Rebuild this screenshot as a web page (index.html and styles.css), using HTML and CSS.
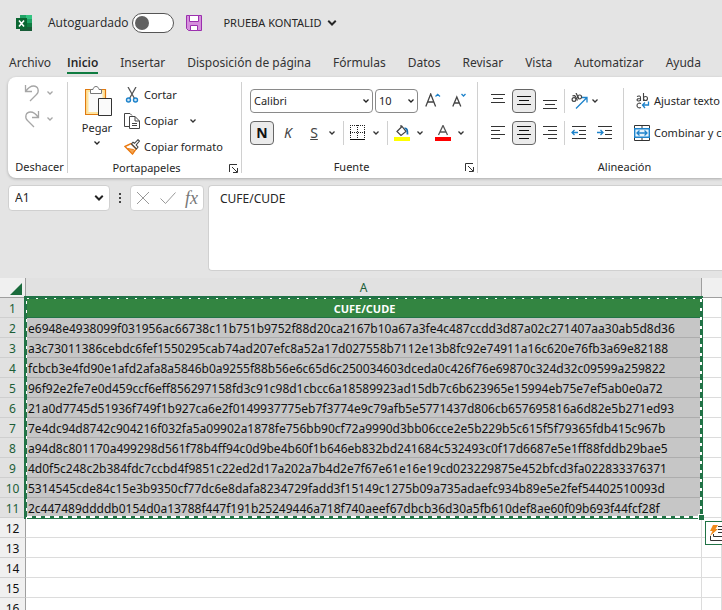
FILE: index.html
```html
<!DOCTYPE html>
<html lang="es">
<head>
    <meta charset="UTF-8">
    <meta name="viewport" content="width=device-width, initial-scale=1.0">
    <title>PRUEBA KONTALID - Excel</title>
    <link rel="stylesheet" href="styles.css">
</head>
<body>

    <svg class="sprite" aria-hidden="true">
        <symbol id="chevron" viewBox="0 0 8 8"><path d="M1.5 2.5 4 5 6.500 2.500" fill="none" stroke="currentColor" stroke-width="1.3"/></symbol>
        <symbol id="launcher" viewBox="0 0 9 9"><path d="M.5 8V.5H8M3 3l5 5M8.500 4v4.500H4" fill="none" stroke="#333"/></symbol>
    </svg>

    <!-- Barra de título -->
    <header class="titlebar">
        <svg class="logo" width="16" height="16" viewBox="0 0 16 16">
            <path d="M4 0h6v4H4z" fill="#21a366"/><path d="M10 0h6v4h-6z" fill="#33c481"/>
            <path d="M4 4h6v4H4z" fill="#107c41"/><path d="M10 4h6v4h-6z" fill="#21a366"/>
            <path d="M4 8h12v8H4z" fill="#185c37"/><path d="M10 8h6v4h-6z" fill="#107c41"/>
            <path d="M0 3h11v11H0z" fill="#0b6632"/>
            <path d="M3 5.500l5 6M8 5.500l-5 6" stroke="#fff" stroke-width="1.600"/>
        </svg>
        <label class="autosave">Autoguardado <input type="checkbox" class="switch"></label>
        <button class="icon-btn save" aria-label="Guardar">
            <svg width="16" height="16" viewBox="0 0 16 16">
                <path d="M.5.5h15v15h-13l-2-2z" fill="#d58fdc" stroke="#9b2fae"/>
                <path d="M3.500.5h9v6h-9zM4.500 10.500h7v5h-7z" fill="#fff" stroke="#9b2fae"/>
            </svg>
        </button>
        <button class="doc-name">PRUEBA KONTALID
            <svg width="12" height="12"><use href="#chevron"/></svg>
        </button>
    </header>

    <nav class="tabs">
        <a href="#" class="file">Archivo</a>
        <a href="#" class="active">Inicio</a>
        <a href="#">Insertar</a>
        <a href="#">Disposición de página</a>
        <a href="#">Fórmulas</a>
        <a href="#">Datos</a>
        <a href="#">Revisar</a>
        <a href="#">Vista</a>
        <a href="#">Automatizar</a>
        <a href="#">Ayuda</a>
    </nav>

    <!-- Cinta de opciones -->
    <section class="ribbon">
        <div class="group undo-group">
            <div class="group-body">
                <button class="icon-btn" aria-label="Deshacer">
                    <svg width="16" height="18" viewBox="0 0 16 18"><path d="M1.500 1v6.500H8M1.500 7.500C4 4 6.500 2 9.500 2c5 0 6 5.500 3 8.500L6 17" fill="none" stroke="#a6a6a6" stroke-width="1.300"/></svg>
                    <svg class="chev" width="8" height="8"><use href="#chevron"/></svg>
                </button>
                <button class="icon-btn" aria-label="Rehacer">
                    <svg width="16" height="18" viewBox="0 0 16 18"><path d="M14.500 1v6.500H8M14.500 7.500C12 4 9.500 2 6.500 2c-5 0-6 5.500-3 8.500L10 17" fill="none" stroke="#a6a6a6" stroke-width="1.300"/></svg>
                    <svg class="chev" width="8" height="8"><use href="#chevron"/></svg>
                </button>
            </div>
            <div class="group-name">Deshacer</div>
        </div>

        <div class="group clip-group">
            <div class="group-body">
                <button class="paste">
                    <svg width="28" height="32" viewBox="0 0 28 32">
                        <path d="M.5 3.500h20v25H.5z" fill="#ffe49c" stroke="#e07a10" stroke-width="1.200"/>
                        <path d="M3.500 6h14v20h-14z" fill="#fafafa"/>
                        <path d="M5.500 7.500v-4H8c.3-2 1.500-3 3-3s2.700 1 3 3h2.500v4z" fill="#fff" stroke="#777"/>
                        <path d="M13.500 12.500h13v17h-13z" fill="#fafafa" stroke="#333"/>
                    </svg>
                    <span>Pegar</span>
                    <svg width="8" height="8"><use href="#chevron"/></svg>
                </button>
                <div class="clip-list">
                    <button>
                        <svg width="16" height="16" viewBox="0 0 16 16"><path d="M4 0l6.500 11.500M12 0L5.500 11.500" fill="none" stroke="#555" stroke-width="1.300"/><circle cx="4.500" cy="13" r="2" fill="#cfe6f7" stroke="#1e83cb" stroke-width="1.400"/><circle cx="11.500" cy="13" r="2" fill="#cfe6f7" stroke="#1e83cb" stroke-width="1.400"/></svg>
                        Cortar
                    </button>
                    <button>
                        <svg width="16" height="16" viewBox="0 0 16 16"><path d="M5 13.500H.5V.5H6l2 2" fill="none" stroke="#444"/><path d="M5.500 3.500H11L15.500 8v7.500h-10z" fill="#fff" stroke="#444"/><path d="M11 3.500V8h4.500M8 10.500h5M8 12.500h5" fill="none" stroke="#444"/></svg>
                        Copiar
                        <svg class="chev" width="8" height="8"><use href="#chevron"/></svg>
                    </button>
                    <button>
                        <svg width="16" height="16" viewBox="0 0 16 16"><path d="M1 7.500L7 4.500l5 5.500-3.500 5z" fill="#fff" stroke="#ea7a12" stroke-width="1.400"/><path d="M3.500 9.500l6 1 1 1-2 3.500z" fill="#f4a552" stroke="#ea7a12"/><path d="M7.500 5l5 5 1.500-2-1.800-2L15.500 2 14 .7 10.500 4.300 9 3.200z" fill="#fff" stroke="#444" stroke-width="1.100"/></svg>
                        Copiar formato
                    </button>
                </div>
            </div>
            <div class="group-name">Portapapeles <svg class="launcher" width="9" height="9"><use href="#launcher"/></svg></div>
        </div>

        <div class="group font-group">
            <div class="group-body rows">
                <div class="row">
                    <select class="font-name" aria-label="Fuente"><option>Calibri</option></select>
                    <select class="font-size" aria-label="Tamaño de fuente"><option>10</option></select>
                    <button class="icon-btn grow" aria-label="Aumentar tamaño de fuente">
                        <svg width="16" height="16" viewBox="0 0 16 16"><path d="M.8 13.500L5.700 1 10.600 13.500M2.500 9h6.500" fill="none" stroke="#444" stroke-width="1.300"/><path d="M10.500 3.500l2.200-2.200L15 3.500" fill="none" stroke="#1e83cb" stroke-width="1.300"/></svg>
                    </button>
                    <button class="icon-btn" aria-label="Disminuir tamaño de fuente">
                        <svg width="16" height="16" viewBox="0 0 16 16"><path d="M.8 13.500L4.800 4l4 9.500M2.300 10h5" fill="none" stroke="#444" stroke-width="1.300"/><path d="M9.500 1l2 2 2-2" fill="none" stroke="#1e83cb" stroke-width="1.300"/></svg>
                    </button>
                </div>
                <div class="row">
                    <button class="toggle on bold">N</button>
                    <button class="toggle italic">K</button>
                    <button class="toggle under">S</button>
                    <svg class="chev near" width="8" height="8"><use href="#chevron"/></svg>
                    <i class="sep"></i>
                    <button class="icon-btn" aria-label="Bordes">
                        <svg width="16" height="16" viewBox="0 0 16 16"><path d="M.5 0v13M14.500 0v13M7.500 0v13M0 .5h15M0 7.500h15" stroke="#222" stroke-dasharray="1 1"/><path d="M0 14.500h15" stroke="#111"/></svg>
                    </button>
                    <svg class="chev" width="8" height="8"><use href="#chevron"/></svg>
                    <i class="sep"></i>
                    <button class="icon-btn" aria-label="Color de relleno">
                        <svg width="16" height="16" viewBox="0 0 16 16"><path d="M3 6.500L8 1.500l4 5-5 4zM7 3V0" fill="#fff" stroke="#444" stroke-width="1.200"/><path d="M10.500 3.500c2.500-.5 3 1.500 3 6" fill="none" stroke="#1b6fae" stroke-width="1.800"/><path d="M0 12h16v4H0z" fill="#ff0"/></svg>
                    </button>
                    <svg class="chev" width="8" height="8"><use href="#chevron"/></svg>
                    <button class="icon-btn color" aria-label="Color de fuente">
                        <svg width="16" height="16" viewBox="0 0 16 16"><path d="M3.500 10L8 .5 12.500 10M5 7h6" fill="none" stroke="#555" stroke-width="1.300"/><path d="M0 12h16v4H0z" fill="red"/></svg>
                    </button>
                    <svg class="chev" width="8" height="8"><use href="#chevron"/></svg>
                </div>
            </div>
            <div class="group-name">Fuente <svg class="launcher" width="9" height="9"><use href="#launcher"/></svg></div>
        </div>

        <div class="group align-group">
            <div class="group-body">
                <div class="rows">
                    <div class="row">
                        <button class="toggle" aria-label="Alinear arriba"><svg width="16" height="16" viewBox="0 0 16 16"><path d="M1 1.500h14M3 5.500h10M1 9.500h14" stroke="#333"/></svg></button>
                        <button class="toggle on" aria-label="Alinear en el medio"><svg width="16" height="16" viewBox="0 0 16 16"><path d="M1 3.500h14M3 7.500h10M1 11.500h14" stroke="#111"/></svg></button>
                        <button class="toggle" aria-label="Alinear abajo"><svg width="16" height="16" viewBox="0 0 16 16"><path d="M1 7.500h14M3 11.500h10M1 15.500h14" stroke="#333"/></svg></button>
                        <i class="sep"></i>
                        <button class="icon-btn" aria-label="Orientación">
                            <svg width="17" height="16" viewBox="0 0 17 16"><g fill="none" stroke="#444" stroke-width="1.200"><circle cx="3" cy="6.500" r="1.900"/><path d="M1.500 3c1.500-1 2.500-.3 3.300 1L6.500 7.500"/><circle cx="8.600" cy="4" r="2"/><path d="M5 0l3 6"/></g><path d="M5 15.500L15.500 5M11 4.500h5v5" fill="none" stroke="#1e83cb" stroke-width="1.300"/></svg>
                        </button>
                        <svg class="chev tight" width="8" height="8"><use href="#chevron"/></svg>
                    </div>
                    <div class="row">
                        <button class="toggle" aria-label="Alinear a la izquierda"><svg width="16" height="16" viewBox="0 0 16 16"><path d="M1 1.500h14M1 5.500h9M1 9.500h14M1 13.500h9" stroke="#333"/></svg></button>
                        <button class="toggle on" aria-label="Centrar"><svg width="16" height="16" viewBox="0 0 16 16"><path d="M1 1.500h14M3 5.500h10M1 9.500h14M3 13.500h10" stroke="#111"/></svg></button>
                        <button class="toggle" aria-label="Alinear a la derecha"><svg width="16" height="16" viewBox="0 0 16 16"><path d="M1 1.500h14M6 5.500h9M1 9.500h14M6 13.500h9" stroke="#333"/></svg></button>
                        <i class="sep"></i>
                        <button class="icon-btn" aria-label="Disminuir sangría"><svg width="16" height="16" viewBox="0 0 16 16"><path d="M1 1.500h14M8 5.500h7M8 9.500h7M1 13.500h14" stroke="#333"/><path d="M7 7.500H1M3.500 5L1 7.500 3.500 10" fill="none" stroke="#1e83cb" stroke-width="1.300"/></svg></button>
                        <button class="icon-btn indent" aria-label="Aumentar sangría"><svg width="16" height="16" viewBox="0 0 16 16"><path d="M1 1.500h14M8 5.500h7M8 9.500h7M1 13.500h14" stroke="#333"/><path d="M0 7.500h6M3.500 5L6 7.500 3.500 10" fill="none" stroke="#1e83cb" stroke-width="1.300"/></svg></button>
                    </div>
                </div>
                <i class="sep tall"></i>
                <div class="rows wide">
                    <button>
                        <svg width="16" height="16" viewBox="0 0 16 16"><g fill="none" stroke="#444" stroke-width="1.100"><path d="M3 3.500c2-1 3.500-.5 3.500 1V8M6.500 5.500C4 5.500 3 6 3 7s2.500 1.500 3.500 0M9.500 0v8"/><circle cx="11.500" cy="5.500" r="2"/><path d="M7 10.500c-2-1-4 0-4 2s2 3 4 2"/></g><path d="M14.500 8.500v3.500h-6M11 9.500L8.500 12l2.500 3" fill="none" stroke="#1e83cb" stroke-width="1.300"/></svg>
                        Ajustar texto
                    </button>
                    <button>
                        <svg width="16" height="16" viewBox="0 0 16 16"><path d="M.5.5h15v15H.5zM8 .5v3M8 12v3.500" fill="#fff" stroke="#333"/><path d="M.7 3.700h14.600v8.600H.7z" fill="#e4f2fc" stroke="#1e83cb" stroke-width="1.400"/><path d="M3 8h10M5.500 5.500L3 8l2.500 2.500M10.500 5.500L13 8l-2.500 2.500" fill="none" stroke="#1e83cb" stroke-width="1.300"/></svg>
                        Combinar y centrar
                    </button>
                </div>
            </div>
            <div class="group-name">Alineación</div>
        </div>
    </section>

    <!-- Barra de fórmulas -->
    <section class="formula-bar">
        <select class="name-box" aria-label="Cuadro de nombres"><option>A1</option></select>
        <svg class="dots" width="4" height="12" viewBox="0 0 4 12"><path d="M1 1h2v2H1zM1 5h2v2H1zM1 9h2v2H1z" fill="#444"/></svg>
        <div class="fx">
            <button class="icon-btn" aria-label="Cancelar"><svg width="14" height="14" viewBox="0 0 14 14"><path d="M1 1l12 12M13 1L1 13" stroke="#999"/></svg></button>
            <button class="icon-btn" aria-label="Introducir"><svg width="16" height="14" viewBox="0 0 16 14"><path d="M.5 7.500l5 5L15.500 1.500" fill="none" stroke="#999"/></svg></button>
            <button class="icon-btn fx-label">fx</button>
        </div>
        <textarea class="formula" aria-label="Barra de fórmulas">CUFE/CUDE</textarea>
    </section>

    <table class="sheet">
        <thead>
            <tr>
                <th class="corner"><svg width="12" height="12" viewBox="0 0 12 12"><path d="M12 0v12H0z" fill="#1a6b3c"/></svg></th>
                <th class="col sel">A</th>
                <th class="col last"></th>
            </tr>
        </thead>
        <tbody>
            <tr class="picked"><th>1</th><td class="title">CUFE/CUDE<div class="ants"><i class="handle"></i><button class="quick" aria-label="Análisis rápido"><svg width="20" height="16" viewBox="0 0 20 16"><path d="M1.500 11v4.500H20M4.500 9v2.500H20M9 7.500h11M9 1.500h11M9 4.500h11" fill="none" stroke="#333"/><path d="M4 0h5L6.500 4H9L1 11l2.500-5H1z" fill="#f08a1c"/></svg></button></div></td><td></td></tr>
            <tr class="picked"><th>2</th><td>e6948e4938099f031956ac66738c11b751b9752f88d20ca2167b10a67a3fe4c487ccdd3d87a02c271407aa30ab5d8d36</td><td></td></tr>
            <tr class="picked"><th>3</th><td>a3c73011386cebdc6fef1550295cab74ad207efc8a52a17d027558b7112e13b8fc92e74911a16c620e76fb3a69e82188</td><td></td></tr>
            <tr class="picked"><th>4</th><td>fcbcb3e4fd90e1afd2afa8a5846b0a9255f88b56e6c65d6c250034603dceda0c426f76e69870c324d32c09599a259822</td><td></td></tr>
            <tr class="picked"><th>5</th><td>96f92e2fe7e0d459ccf6eff856297158fd3c91c98d1cbcc6a18589923ad15db7c6b623965e15994eb75e7ef5ab0e0a72</td><td></td></tr>
            <tr class="picked"><th>6</th><td>21a0d7745d51936f749f1b927ca6e2f0149937775eb7f3774e9c79afb5e5771437d806cb657695816a6d82e5b271ed93</td><td></td></tr>
            <tr class="picked"><th>7</th><td>7e4dc94d8742c904216f032fa5a09902a1878fe756bb90cf72a9990d3bb06cce2e5b229b5c615f5f79365fdb415c967b</td><td></td></tr>
            <tr class="picked"><th>8</th><td>a94d8c801170a499298d561f78b4ff94c0d9be4b60f1b646eb832bd241684c532493c0f17d6687e5e1ff88fddb29bae5</td><td></td></tr>
            <tr class="picked"><th>9</th><td>4d0f5c248c2b384fdc7ccbd4f9851c22ed2d17a202a7b4d2e7f67e61e16e19cd023229875e452bfcd3fa022833376371</td><td></td></tr>
            <tr class="picked"><th>10</th><td>5314545cde84c15e3b9350cf77dc6e8dafa8234729fadd3f15149c1275b09a735adaefc934b89e5e2fef54402510093d</td><td></td></tr>
            <tr class="picked"><th>11</th><td>2c447489ddddb0154d0a13788f447f191b25249446a718f740aeef67dbcb36d30a5fb610def8ae60f09b693f44fcf28f</td><td></td></tr>
            <tr><th>12</th><td></td><td></td></tr>
            <tr><th>13</th><td></td><td></td></tr>
            <tr><th>14</th><td></td><td></td></tr>
            <tr><th>15</th><td></td><td></td></tr>
            <tr><th>16</th><td></td><td></td></tr>
        </tbody>
    </table>

</body>
</html>
```
FILE: styles.css
```css
* {
    box-sizing: border-box;
}
html {
    height: 100%;
    overflow: hidden;
}
body {
    margin: 0;
    height: 100%;
    overflow: hidden;
    background-color: #e4e4e4;
    color: #262626;
    font-family: "Noto Sans", "Open Sans", sans-serif;
    font-size: 12px;
    line-height: 16px;
}
button, select, textarea {
    font: inherit;
    color: inherit;
}
button {
    display: flex;
    align-items: center;
    padding: 0;
    border: 0;
    background: none;
    font-size: 11px;
    white-space: nowrap;
}
svg {
    display: block;
    flex: none;
}
.sprite {
    position: absolute;
    width: 0;
    height: 0;
}
.chev {
    color: #333;
}

/* Barra de título */
.titlebar {
    display: flex;
    align-items: center;
    height: 46px;
    padding-left: 16px;
}
.autosave {
    display: flex;
    align-items: center;
    gap: 4px;
    margin-left: 16px;
    font-family: "Open Sans", sans-serif;
}
.switch {
    appearance: none;
    width: 42px;
    height: 20px;
    margin: 0;
    padding: 2px;
    border: 1px solid #555;
    border-radius: 10px;
    background-color: #fff;
}
.switch::before {
    content: "";
    display: block;
    width: 14px;
    height: 14px;
    border-radius: 50%;
    background-color: #616161;
}
.save {
    margin-left: 12px;
}
.doc-name {
    gap: 4px;
    margin-left: 21px;
}

.tabs {
    display: flex;
    gap: 22px;
    height: 31px;
    padding: 7px 0 0 9px;
    white-space: nowrap;
}
.tabs a {
    height: 21px;
    padding-top: 2px;
    color: #333;
    text-decoration: none;
}
.tabs .file {
    margin-right: -6px;
}
.tabs .active {
    border-bottom: 2px solid #107c41;
    color: #222;
    font-family: "Open Sans", sans-serif;
    font-weight: 600;
}

/* Cinta */
.ribbon {
    display: flex;
    margin-left: 8px;
    padding: 5px 0;
    border-radius: 8px 0 0 8px;
    background-color: #fff;
    box-shadow: 0 1px 3px rgba(0, 0, 0, 0.25);
    overflow: hidden;
}
.group {
    display: flex;
    flex: none;
    flex-direction: column;
    height: 91px;
    border-right: 1px solid #d0d0d0;
}
.group-body {
    display: flex;
    flex: 1;
}
.group-name {
    position: relative;
    height: 16px;
    margin-bottom: -2px;
    font-size: 11px;
    text-align: center;
}
.launcher {
    position: absolute;
    right: 3px;
    bottom: 3px;
}
.undo-group {
    width: 60px;
}
.undo-group .group-body {
    flex-direction: column;
    gap: 8px;
    padding: 2px 0 0 16px;
}
.undo-group .group-name {
    padding-left: 4px;
}
.undo-group .icon-btn {
    gap: 6px;
}
.undo-group .chev {
    color: #a6a6a6;
}
.clip-group {
    width: 174px;
}
.clip-group .group-name {
    padding-right: 16px;
}
.paste {
    flex-direction: column;
    width: 36px;
    margin: 4px 0 0 13px;
}
.paste span {
    margin: 2px 4px 3px 0;
}
.paste span + svg {
    margin-right: 4px;
}
.clip-list {
    margin-left: 7px;
}
.clip-list button {
    gap: 4px;
    height: 26px;
}
.clip-list .chev {
    margin-left: 7px;
}
.font-group {
    width: 236px;
}
.rows {
    display: flex;
    flex-direction: column;
    gap: 8px;
    padding-top: 7px;
}
.font-group .rows {
    padding-left: 8px;
}
.font-group .group-name {
    padding-right: 16px;
}
.row {
    display: flex;
    align-items: center;
    height: 24px;
}
select {
    appearance: none;
    height: 24px;
    padding: 0 3px;
    border: 1px solid #8a8a8a;
    border-radius: 4px;
    background: #fff url("data:image/svg+xml,%3Csvg xmlns='http://www.w3.org/2000/svg' width='8' height='8' viewBox='0 0 8 8'%3E%3Cpath d='M1.5 2.5 4 5 6.5 2.5' fill='none' stroke='%23222' stroke-width='1.3'/%3E%3C/svg%3E") no-repeat right 2px center;
    font-size: 11px;
}
.font-name {
    width: 123px;
    margin-right: 2px;
}
.font-size {
    width: 43px;
}
.grow {
    margin: 0 11px 0 7px;
}
.toggle {
    justify-content: center;
    width: 24px;
    height: 24px;
    border: 1px solid transparent;
    border-radius: 4px;
    margin-right: 2px;
    color: #444;
    font-size: 14px;
}
.on {
    border-color: #666;
    background-color: #ebebeb;
    color: #111;
}
.bold {
    font-weight: bold;
}
.italic {
    font-style: italic;
}
.under {
    text-decoration: underline;
}
.row .chev {
    margin-left: 6px;
}
.row .near {
    margin-left: 0;
}
.row .tight {
    margin-left: 3px;
}
.sep {
    width: 1px;
    height: 24px;
    margin: 0 6px 0 7px;
    background-color: #d0d0d0;
}
.color {
    margin-left: 11px;
}
.align-group {
    width: 294px;
}
.align-group .group-body {
    padding-left: 8px;
}
.align-group .row .sep {
    margin-left: 0;
}
.indent {
    margin-left: 10px;
}
.align-group .tall {
    height: 62px;
    margin: 6px 10px 0;
}
.wide button {
    gap: 4px;
    height: 24px;
}

/* Barra de fórmulas */
.formula-bar {
    display: flex;
    align-items: flex-start;
    height: 100px;
    padding: 7px 0 8px 8px;
}
.formula-bar .name-box {
    width: 102px;
    height: 26px;
    padding: 0 6px;
    border-color: #d0d0d0;
    background-position: right 4px center;
    background-size: 12px;
    font-size: 12px;
}
.dots {
    margin: 7px 8px 0;
}
.fx {
    display: flex;
    align-items: center;
    justify-content: space-between;
    width: 74px;
    height: 26px;
    padding: 0 5px;
    border: 1px solid #d0d0d0;
    border-radius: 4px;
    background-color: #fff;
}
.fx-label {
    color: #777;
    font-family: "Liberation Serif", serif;
    font-size: 18px;
    font-style: italic;
}
.formula {
    flex: 1;
    height: 86px;
    margin-left: 4px;
    padding: 5px 11px;
    border: 1px solid #d0d0d0;
    border-right: 0;
    border-radius: 4px 0 0 4px;
    background-color: #fff;
    resize: none;
}

/* Hoja */
.sheet {
    width: 100%;
    border-collapse: separate;
    border-spacing: 0;
    table-layout: fixed;
    background-color: #fff;
    color: #111;
}
.sheet th, .sheet td {
    height: 20px;
    padding: 3px 0 0 2px;
    border-right: 1px solid #dcdcdc;
    border-bottom: 1px solid #dcdcdc;
    white-space: nowrap;
    line-height: 16px;
}
.sheet th {
    padding-left: 0;
    border-right-color: #9f9f9f;
    border-bottom-color: #cfcfcf;
    background-color: #f0f0f0;
    font-weight: normal;
}
.sheet thead th {
    padding-top: 0;
    border-bottom-color: #9f9f9f;
}
.sheet .corner {
    width: 26px;
}
.corner svg {
    margin: 2px 3px 0 auto;
}
.sheet .last {
    width: 20px;
    border-right: 0;
}
.sheet .sel, .sheet .picked th {
    background-color: #e1e1e1;
    color: #1c5e37;
}
.picked td:nth-child(2) {
    border-bottom-color: #adadad;
    background-color: #c6c6c6;
}
.sheet .picked .title {
    position: relative;
    border-bottom-color: #217346;
    background-color: #338541;
    color: #fff;
    font-size: 11px;
    font-weight: bold;
    text-align: center;
}
/* Borde discontinuo de la selección copiada */
.ants {
    position: absolute;
    top: -2px;
    left: -2px;
    right: -2px;
    height: 223px;
    background:
        repeating-linear-gradient(90deg, transparent 0 3px, #fff 3px 5px, transparent 5px 9px) 0 2px / 100% 1px no-repeat,
        repeating-linear-gradient(90deg, transparent 0 3px, #fff 3px 8px, transparent 8px 9px) 0 220px / 100% 2px no-repeat,
        repeating-linear-gradient(transparent 0 5px, #fff 5px 8px, transparent 8px 9px) 2px 0 / 1px 100% no-repeat,
        repeating-linear-gradient(transparent 0 3px, #fff 3px 6px, transparent 6px 9px) right 1px top / 2px 100% no-repeat,
        linear-gradient(#217346, #217346) top / 100% 3px no-repeat,
        linear-gradient(#217346, #217346) bottom / 100% 3px no-repeat,
        linear-gradient(#217346, #217346) left / 3px 100% no-repeat,
        linear-gradient(#217346, #217346) right / 3px 100% no-repeat;
}
.handle {
    position: absolute;
    right: -1px;
    bottom: -1px;
    width: 6px;
    height: 6px;
    border: 1px solid #fff;
    border-width: 1px 0 0 1px;
    background-color: #217346;
}
.quick {
    position: absolute;
    top: 225px;
    left: calc(100% + 2px);
    width: 26px;
    height: 24px;
    padding-left: 3px;
    border: 1px solid #217346;
    background-color: #fff;
}
```
